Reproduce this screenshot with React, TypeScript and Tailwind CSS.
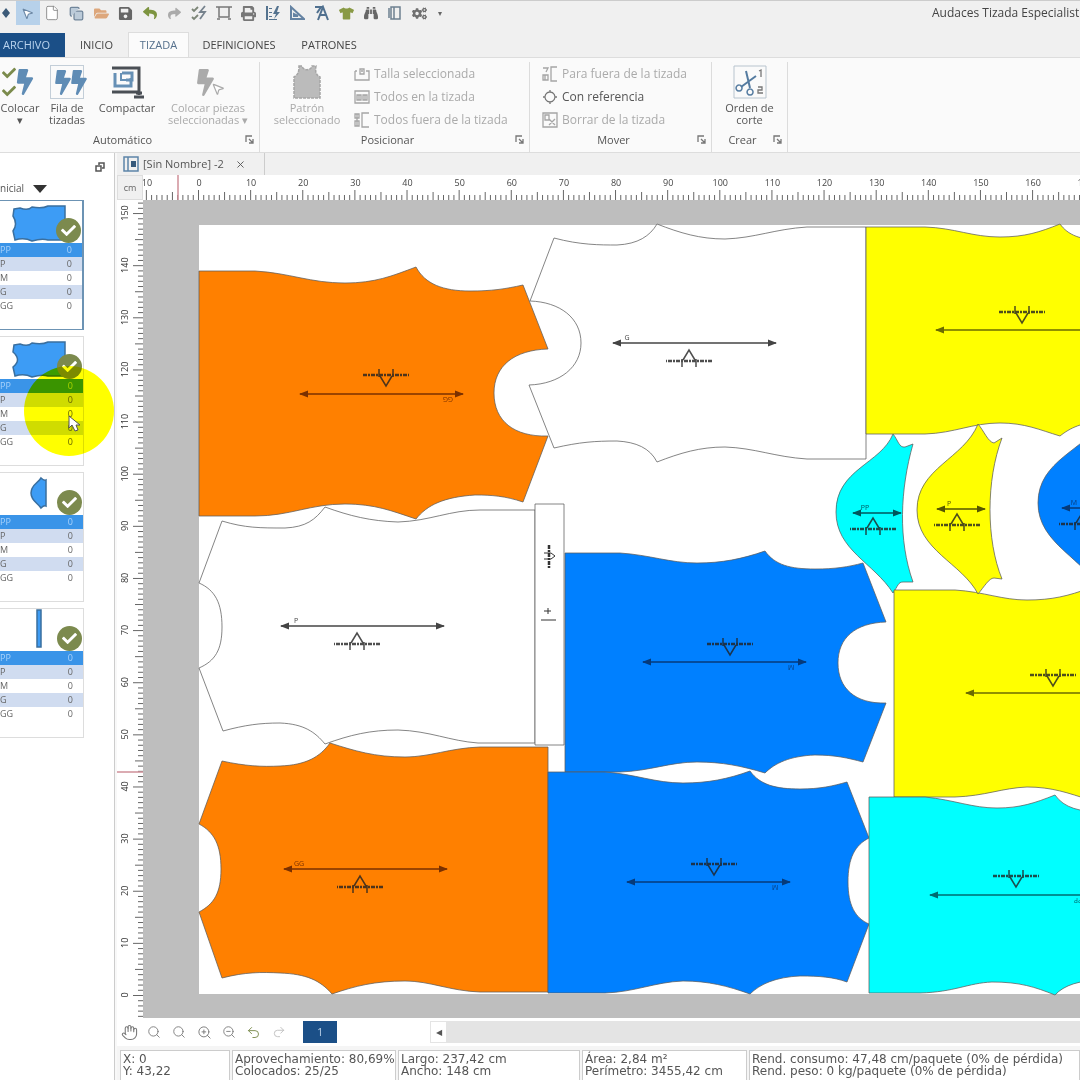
import type { ReactNode } from "react";
import {
  FaBinoculars,
  FaBolt,
  FaCheck,
  FaCogs,
  FaFolderOpen,
  FaPrint,
  FaReply,
  FaSave,
  FaShare,
  FaTshirt,
} from "react-icons/fa";
import { Copy, File, Hand, MousePointer2, Redo2, Search, Undo2, X, ZoomIn, ZoomOut } from "lucide-react";

const ORANGE = "#ff8000";
const BLUE = "#0080ff";
const YELLOW = "#ffff00";
const CYAN = "#00ffff";

// pixels per centimetre on the marker
const CM = 5.213;

const pieces = [
  { fill: "#fff", d: "M554 238 C580 245 600 245 617 245 C638 244 650 236 657 224 C680 233 700 239 725 239 C755 238 775 229 807 227 H866 V459 H807 C775 457 755 448 725 447 C700 447 680 453 657 462 C650 448 636 442 617 441 C595 441 580 442 554 448 L529 385 C560 384 581 367 581 343 C581 318 560 302 530 301 Z" },
  { fill: ORANGE, d: "M199 271 H255 C290 273 310 283 345 283 C375 283 392 276 416 267 C425 284 443 291 470 291 C492 291 505 289 523 285 L548 349 C514 350 494 366 494 393 C494 421 514 437 548 436 L523 502 C505 496 492 495 475 495 C444 497 427 505 416 519 C392 511 375 504 345 504 C310 504 290 516 255 516 H199 Z" },
  { fill: "#fff", d: "M222 521 C245 528 260 528 285 528 C306 527 315 520 325 507 C350 516 370 521 398 522 C430 521 450 510 480 510 H535 V743 H478 C450 741 430 731 398 730 C370 730 350 735 325 744 C315 732 304 724 280 723 C260 723 245 725 223 731 L199 668 C215 661 222 650 222 627 C222 603 215 590 199 583 Z" },
  { fill: ORANGE, d: "M222 761 C245 766 262 767 280 766 C306 765 320 757 330 743 C355 751 375 757 405 757 C430 757 450 748 480 747 H548 V992 H480 C450 991 430 981 405 981 C375 981 355 986 332 994 C320 980 306 974 280 973 C262 972 245 972 222 978 L199 912 C214 904 221 893 221 869 C221 845 214 832 199 824 Z" },
  { fill: "#fff", d: "M535 504 H564 V745 H535 Z" },
  { fill: BLUE, d: "M565 553 H620 C650 555 670 563 697 563 C722 563 742 559 765 551 C775 565 790 569 815 569 C835 569 848 567 863 563 L886 622 C855 623 838 638 838 663 C838 688 855 704 886 703 L863 762 C848 758 835 755 815 755 C790 756 775 763 765 773 C742 766 722 762 697 762 C670 762 650 771 620 772 H565 Z" },
  { fill: BLUE, d: "M548 772 H605 C635 774 655 783 683 783 C708 783 728 779 750 771 C760 785 776 789 800 789 C820 789 833 786 847 782 L869 838 C855 845 848 858 848 882 C848 905 855 918 869 924 L847 982 C833 977 820 976 800 976 C776 977 760 984 750 994 C728 986 708 981 683 981 C655 982 635 992 605 993 H548 Z" },
  { fill: YELLOW, d: "M866 227 H925 C955 228 972 237 1000 237 C1025 237 1040 232 1060 224 C1068 235 1080 240 1105 241 C1130 241 1145 239 1160 235 L1182 292 C1150 293 1135 308 1135 331 C1135 354 1150 370 1182 370 L1160 428 C1145 423 1130 421 1105 421 C1082 422 1070 428 1060 436 C1040 430 1025 423 1000 423 C972 423 955 433 925 434 H866 Z" },
  { fill: CYAN, d: "M893 434 C881 464 836 469 836 512 C836 550 874 563 893 593 C898 586 898 582 903 582 L913 582 C898 540 900 490 913 444 L905 447 C899 448 898 440 893 434 Z" },
  { fill: YELLOW, d: "M894 590 H955 C985 592 1002 600 1027 600 C1052 600 1068 596 1090 588 C1098 600 1114 604 1138 604 C1158 604 1170 602 1184 598 L1206 655 C1175 656 1160 671 1160 694 C1160 717 1175 733 1206 732 L1184 790 C1170 786 1158 784 1138 784 C1114 785 1098 792 1090 800 C1068 793 1052 787 1027 787 C1002 788 985 796 955 797 H894 Z" },
  { fill: YELLOW, d: "M978 424 C964 459 917 468 917 510 C917 550 962 563 978 594 C984 587 989 578 994 578 L1002 579 C986 540 986 480 1002 438 L994 443 C988 442 984 431 978 424 Z" },
  { fill: BLUE, d: "M1102 421 C1085 450 1038 460 1038 503 C1038 545 1086 558 1102 594 C1112 580 1118 575 1127 578 C1111 540 1111 480 1127 438 C1118 445 1111 436 1102 421 Z" },
  { fill: CYAN, d: "M869 797 H925 C955 800 972 808 997 808 C1020 808 1035 803 1055 795 C1064 808 1080 812 1103 812 C1123 812 1136 810 1150 806 L1172 862 C1142 864 1128 878 1128 895 C1128 915 1142 930 1172 929 L1150 985 C1136 981 1123 980 1103 980 C1080 980 1064 985 1055 995 C1035 987 1020 982 992 982 C968 983 955 992 920 993 H869 Z" },
];

// grain lines: start, end, baseline; up = mark sits under the line
const grains = [
  { x1: 300, x2: 463, y: 394, mx: 386, my: 375, up: false, size: "GG", lx: 448, ink: "#7a3000" },
  { x1: 613, x2: 776, y: 343, mx: 689, my: 361, up: true, size: "G", lx: 627, ink: "#444" },
  { x1: 281, x2: 444, y: 626, mx: 357, my: 644, up: true, size: "P", lx: 296, ink: "#444" },
  { x1: 284, x2: 447, y: 869, mx: 360, my: 887, up: true, size: "GG", lx: 299, ink: "#7a3000" },
  { x1: 643, x2: 806, y: 662, mx: 730, my: 644, up: false, size: "M", lx: 791, ink: "#063a7a" },
  { x1: 627, x2: 790, y: 882, mx: 714, my: 864, up: false, size: "M", lx: 775, ink: "#063a7a" },
  { x1: 936, x2: 1099, y: 330, mx: 1022, my: 312, up: false, size: "P", lx: 1086, ink: "#6b6b00" },
  { x1: 966, x2: 1129, y: 693, mx: 1053, my: 675, up: false, size: "P", lx: 1116, ink: "#6b6b00" },
  { x1: 930, x2: 1093, y: 895, mx: 1016, my: 876, up: false, size: "PP", lx: 1078, ink: "#006b70" },
  { x1: 853, x2: 901, y: 513, mx: 873, my: 529, up: true, size: "PP", lx: 865, ink: "#00565c" },
  { x1: 937, x2: 985, y: 509, mx: 957, my: 525, up: true, size: "P", lx: 949, ink: "#555500" },
  { x1: 1062, x2: 1110, y: 508, mx: 1082, my: 524, up: true, size: "M", lx: 1074, ink: "#063a7a" },
];

function Grain({ g }: { g: (typeof grains)[number] }) {
  return (
    <g stroke={g.ink} fill={g.ink}>
      <path d={`M${g.x1} ${g.y} H${g.x2}`} strokeWidth="1.5" />
      <path d={`M${g.x1 - 1} ${g.y} l9 -3.5 v7 Z M${g.x2 + 1} ${g.y} l-9 -3.5 v7 Z`} stroke="none" />
      <g transform={`translate(${g.mx} ${g.my}) rotate(${g.up ? 180 : 0})`} stroke="#222" fill="none" opacity="0.8">
        <path d="M-23 0 H23" strokeWidth="2.5" strokeDasharray="4 1 2 1" />
        <path d="M-7 -6 V2 M7 -6 V2 M-6 1 L0 11 L6 1" strokeWidth="1.5" />
      </g>
      <text
        transform={g.up ? `translate(${g.lx} ${g.y - 3})` : `translate(${g.lx} ${g.y + 3}) rotate(180)`}
        textAnchor="middle"
        fontSize="7"
        stroke="none"
      >
        {g.size}
      </text>
    </g>
  );
}

function range(from: number, to: number) {
  return Array.from({ length: to - from + 1 }, (_, i) => from + i);
}

function tickLength(n: number) {
  if (n % 10 === 0) return 10;
  return n % 5 === 0 ? 8 : 5;
}

function HorizontalRuler() {
  return (
    <svg className="w-full h-full" aria-hidden="true">
      {range(-10, 240).map((n) => (
        <path key={n} d={`M${55.5 + n * CM} 25 v${-tickLength(n)}`} stroke="#666" strokeWidth="1" />
      ))}
      {range(-1, 24).map((n) => (
        <text key={n} x={56 + n * 10 * CM} y="11" textAnchor="middle" fontSize="9" fill="#444">
          {Math.abs(n * 10)}
        </text>
      ))}
      <path d="M35 0 V25" stroke="#cf8f98" strokeWidth="1.5" />
    </svg>
  );
}

function VerticalRuler() {
  return (
    <svg className="w-full h-full" aria-hidden="true">
      {range(-80, 152).map((n) => (
        <path key={n} d={`M26 ${795.5 - n * CM} h${-tickLength(n)}`} stroke="#666" strokeWidth="1" />
      ))}
      {range(0, 15).map((n) => (
        <text
          key={n}
          transform={`translate(11 ${795 - n * 10 * CM}) rotate(-90)`}
          textAnchor="middle"
          fontSize="9"
          fill="#333"
        >
          {n * 10}
        </text>
      ))}
      <path d="M0 572 H26" stroke="#cf8f98" strokeWidth="1.5" />
    </svg>
  );
}

function Marker() {
  return (
    <svg className="absolute inset-0 w-full h-full" role="img" aria-label="Tizada">
      <g transform="translate(-143 -200)">
        <rect x="199" y="225" width="1237" height="769" fill="#fff" />
        {pieces.map((p) => (
          <path key={p.d} d={p.d} fill={p.fill} stroke="#5c5c5c" strokeOpacity="0.75" strokeWidth="1" />
        ))}
        {grains.map((g) => (
          <Grain key={`${g.x1}-${g.y}`} g={g} />
        ))}
        {/* tira */}
        <g stroke="#333" strokeWidth="1" fill="none">
          <path d="M549 545 V568" strokeDasharray="4 1 2 1" strokeWidth="2.5" />
          <path d="M544 553 H551 L555 556 L551 559 H544" />
          <path d="M541 620 H556" />
          <path d="M544 611 H551 M548 608 V614" />
        </g>
      </g>
    </svg>
  );
}

/* barra de acceso rápido */
const quickTools: { label: string; icon: ReactNode; on?: boolean }[] = [
  {
    label: "Mover",
    icon: (
      <svg viewBox="0 0 16 16" className="size-4" fill="#3c5a78">
        <path d="M11 3 L15 8 L11 13 L7 8 Z M2 7 h3 v2 h-3 Z" />
      </svg>
    ),
  },
  { label: "Seleccionar", icon: <MousePointer2 size={13} className="text-[#6a87a5] fill-white" />, on: true },
  { label: "Nuevo", icon: <File size={16} strokeWidth={1.2} className="text-[#777] fill-white" /> },
  { label: "Copiar", icon: <Copy size={15} className="text-[#70859a] fill-[#bccbd9]" /> },
  { label: "Abrir", icon: <FaFolderOpen size={15} className="text-[#dda77c]" /> },
  { label: "Guardar", icon: <FaSave size={15} className="text-[#666]" /> },
  { label: "Deshacer", icon: <FaReply size={14} className="text-[#7d9440]" /> },
  { label: "Rehacer", icon: <FaShare size={13} className="text-[#aaa]" /> },
  {
    label: "Colocar",
    icon: (
      <svg viewBox="0 0 16 16" className="size-4" fill="none" stroke="#7c8577" strokeWidth="1.8">
        <path d="M1 4 l2 2 l4 -4 M1 12 l2 2 l4 -4" />
        <path d="M14 1 L9 7 H14 L9 14" stroke="#76828d" />
      </svg>
    ),
  },
  {
    label: "Ajustar",
    icon: (
      <svg viewBox="0 0 16 16" className="size-4" fill="none" stroke="#777" strokeWidth="1.5">
        <path d="M0 2 H16 M3 2 V12 H13 V2 M1 14 H4 M12 14 H15" />
      </svg>
    ),
  },
  { label: "Imprimir", icon: <FaPrint size={15} className="text-[#777]" /> },
  {
    label: "Medir",
    icon: (
      <svg viewBox="0 0 16 16" className="size-4" fill="#55738f">
        <path d="M1 1 h2 v14 h-2 Z M4 3 h3 v1 h-3 Z M4 7 h3 v1 h-3 Z M4 11 h3 v1 h-3 Z M12 1 L8 9 h3 L9 14 L15 7 h-3 L14 1 Z M4 14 h8 v1 h-8 Z" />
      </svg>
    ),
  },
  {
    label: "Escuadra",
    icon: (
      <svg viewBox="0 0 16 16" className="size-4" fill="none" stroke="#6583a3" strokeWidth="2">
        <path d="M2 2 V14 H15 Z M5 9 V11 H9 Z" />
      </svg>
    ),
  },
  {
    label: "Texto",
    icon: (
      <svg viewBox="0 0 16 16" className="size-4" fill="none" stroke="#50708f" strokeWidth="2">
        <path d="M4 15 L9 2 L14 15 M6 10 H12 M1 2 H7 L3 8" />
      </svg>
    ),
  },
  { label: "Modelo", icon: <FaTshirt size={15} className="text-[#899a45]" /> },
  { label: "Buscar", icon: <FaBinoculars size={14} className="text-[#666]" /> },
  {
    label: "Informe",
    icon: (
      <svg viewBox="0 0 16 16" className="size-4" fill="none" stroke="#6d8090" strokeWidth="1.5">
        <path d="M4 2 H13 V14 H4 Z M7 2 V14 M2 3 V13" />
      </svg>
    ),
  },
  { label: "Opciones", icon: <FaCogs size={15} className="text-[#707070]" /> },
];

function TitleBar() {
  return (
    <header className="flex items-center justify-between h-8 bg-[#f0f0f0] border-t border-[#ccc] overflow-hidden">
      <div className="flex items-start h-full">
        <div className="grid grid-cols-[repeat(18,1fr)] w-[441px] -ml-[9px]">
          {quickTools.map((t) => (
            <button
              key={t.label}
              aria-label={t.label}
              className={t.on ? "flex items-center justify-center h-6 bg-[#b7d1ea]" : "flex items-center justify-center h-6"}
            >
              {t.icon}
            </button>
          ))}
        </div>
        <button aria-label="Personalizar" className="w-4 h-6 text-[8px] text-[#666]">
          ▾
        </button>
      </div>
      <h1 className="w-[148px] h-8 pt-1 text-xs whitespace-nowrap overflow-hidden text-[#444]">Audaces Tizada Especialist</h1>
    </header>
  );
}

function Tabs() {
  return (
    <nav className="flex items-end h-[25px] bg-[#f0f0f0] text-[11px] text-[#444]">
      <button className="w-[65px] h-6 pr-3 bg-[#1b4f87] text-[#b9d3ee]">ARCHIVO</button>
      <button className="w-[63px] h-6">INICIO</button>
      <button className="w-[61px] h-[25px] bg-[#fbfbfb] border border-b-0 border-[#ddd] text-[#55708c]">TIZADA</button>
      <button className="w-[100px] h-6">DEFINICIONES</button>
      <button className="w-20 h-6">PATRONES</button>
    </nav>
  );
}

function Group({ title, width, children }: { title: string; width: string; children: ReactNode }) {
  return (
    <section className={`${width} flex flex-col shrink-0 border-r border-[#dcdcdc]`}>
      <div className="flex-1 flex">{children}</div>
      <div className="flex items-center h-5 pr-1 pb-1 text-[11px] font-medium text-[#555]">
        <span className="flex-1 text-center">{title}</span>
        <button aria-label={`Más opciones de ${title}`}>
          <svg viewBox="0 0 10 10" className="size-[10px]" fill="none" stroke="#777">
            <path d="M1 7 V1 H7 M4 4 L8 8 M8 4 V8 H4" strokeWidth="1.3" />
          </svg>
        </button>
      </div>
    </section>
  );
}

function BigButton({ lines, width, icon, off }: { lines: string[]; width: string; icon: ReactNode; off?: boolean }) {
  return (
    <button className={`${width} flex flex-col items-center shrink-0 leading-3 whitespace-nowrap text-[11px] ${off ? "text-[#aaa]" : "text-[#555]"}`}>
      <span className="flex items-center justify-center h-10">{icon}</span>
      {lines.map((l) => (
        <span key={l}>{l}</span>
      ))}
    </button>
  );
}

function SmallButton({ label, icon, on }: { label: string; icon: ReactNode; on?: boolean }) {
  return (
    <button className={`flex items-center gap-1 h-[23px] text-xs whitespace-nowrap ${on ? "text-[#555]" : "text-[#aaa]"}`}>
      {icon}
      {label}
    </button>
  );
}

function SmallIcon({ d, dark }: { d: string; dark?: boolean }) {
  return (
    <svg viewBox="0 0 16 16" className="size-4" fill="none" stroke={dark ? "#777" : "#a5a5a5"} strokeWidth="1.3">
      <path d={d} />
    </svg>
  );
}

function Ribbon() {
  return (
    <div className="flex h-24 pt-1 bg-[#fafafa] border-y border-[#ddd] overflow-hidden">
      <Group title="Automático" width="w-[260px]">
        <BigButton
          width="w-10"
          lines={["Colocar", "▾"]}
          icon={
            <span className="flex items-center">
              <span className="flex flex-col gap-1 text-[#7b8b4c]">
                <FaCheck size={14} />
                <FaCheck size={14} />
              </span>
              <FaBolt size={26} className="-ml-1 text-[#5f8cb5]" />
            </span>
          }
        />
        <BigButton
          width="w-[54px]"
          lines={["Fila de", "tizadas"]}
          icon={
            <span className="flex items-center w-[34px] h-[34px] border border-[#c3ced8] text-[#5f8cb5]">
              <FaBolt size={25} className="-mr-2" />
              <FaBolt size={25} className="-mr-2" />
            </span>
          }
        />
        <BigButton
          width="w-[66px]"
          lines={["Compactar"]}
          icon={
            <svg viewBox="0 0 34 34" className="size-[34px]" fill="none">
              <path d="M2 3 H29 V30 M2 27 H29 M24 32 H34 M26 28 H32" stroke="#4a4f55" strokeWidth="3" />
              <path d="M5 8 V21 H21 V13 M12 8 H22 V15 H16" stroke="#6690b5" strokeWidth="3" />
              <path d="M11 8 V15 H16" stroke="#6690b5" strokeWidth="2" />
            </svg>
          }
        />
        <BigButton
          width="w-24"
          off
          lines={["Colocar piezas", "seleccionadas ▾"]}
          icon={
            <span className="flex items-end text-[#aaa]">
              <FaBolt size={27} />
              <MousePointer2 size={14} className="-ml-2 fill-white" />
            </span>
          }
        />
      </Group>

      <Group title="Posicionar" width="w-[270px]">
        <BigButton
          width="w-[94px]"
          off
          lines={["Patrón", "seleccionado"]}
          icon={
            <svg viewBox="0 0 28 34" className="w-7 h-[34px]" fill="#bbb" stroke="#a5a5a5" strokeDasharray="3 1">
              <path d="M6 1 H9 C10 6 18 6 19 1 H23 C22 7 23 10 27 12 V33 H1 V12 C5 10 6 7 6 1 Z" strokeWidth="1.5" />
            </svg>
          }
        />
        <div className="flex flex-col">
          <SmallButton label="Talla seleccionada" icon={<SmallIcon d="M1 5 V14 H15 V5 H12 M1 5 H3 M6 8 V3 H10 V8 Z M7 5 H9" />} />
          <SmallButton label="Todos en la tizada" icon={<SmallIcon d="M1 2 H15 V14 H1 Z M3 6 V11 H7 V6 Z M9 6 V11 H13 V6 Z M5 6 V11 M11 6 V11" />} />
          <SmallButton label="Todos fuera de la tizada" icon={<SmallIcon d="M15 1 H8 V15 H15 M1 2 H5 V6 H1 Z M1 9 H5 V14 H1 Z M3 2 V14" />} />
        </div>
      </Group>

      <Group title="Mover" width="w-[182px]">
        <div className="flex flex-col pl-3">
          <SmallButton label="Para fuera de la tizada" icon={<SmallIcon d="M15 1 H9 V15 H15 M1 2 H6 L4 6 M1 9 H6 V14 H1 Z M3 9 V14" />} />
          <SmallButton on label="Con referencia" icon={<SmallIcon dark d="M8 3 A5 5 0 1 1 7.9 3 M8 1 V3 M8 13 V15 M1 8 H3 M13 8 H15" />} />
          <SmallButton label="Borrar de la tizada" icon={<SmallIcon d="M1 1 H15 V15 H1 Z M3 3 V8 H7 V3 Z M7 7 L13 13 M13 7 L7 13" />} />
        </div>
      </Group>

      <Group title="Crear" width="w-[76px]">
        <BigButton
          width="w-[75px]"
          lines={["Orden de", "corte"]}
          icon={
            <svg viewBox="0 0 34 34" className="size-[34px]" fill="none" stroke="#547ba0" strokeWidth="2">
              <path d="M1 1 H33 V33 H1 Z" stroke="#b8c4ce" strokeWidth="1" />
              <path d="M13 6 L17 23 M23 11 L8 22" />
              <path d="M6 20 a3 3 0 1 0 .1 0 M17 24 a3 3 0 1 0 .1 0" strokeWidth="1.5" />
              <path d="M26 6 L28 5 V12 M25 22 H29 V25 H25 V28 H30" stroke="#777" strokeWidth="1.3" />
            </svg>
          }
        />
      </Group>
    </div>
  );
}

/* lista de patrones */
const sizes = ["PP", "P", "M", "G", "GG"];

const patterns = [
  { name: "Frente", on: true, d: "M14 8 L20 7 Q28 10 32 6 Q42 8 48 5 H65 V39 H48 Q42 37 32 40 Q24 36 15 39 L13 30 Q18 23 13 15 Z" },
  { name: "Espalda", d: "M14 8 L20 7 Q28 10 32 6 Q42 8 48 5 H65 V39 H48 Q42 37 32 40 Q24 36 15 39 L13 30 Q22 23 13 15 Z" },
  { name: "Manga", d: "M41 5 Q44 8 46 7 V33 Q44 32 41 35 C38 30 31 28 31 20 C31 12 38 10 41 5 Z" },
  { name: "Tira", d: "M37 1 H41 V38 H37 Z" },
];

function PatternCard({ p }: { p: (typeof patterns)[number] }) {
  return (
    <div className={`relative w-[84px] h-[130px] border-y border-r ${p.on ? "border-[#6c93b4] border-r-2" : "border-[#ddd]"}`}>
      <svg className="w-full h-[42px]" aria-label={p.name}>
        <path d={p.d} fill="#3d9cf5" stroke="#3a6f9f" strokeWidth="1.5" />
      </svg>
      <table className="w-full text-[9px] text-[#666]">
        <tbody>
          {sizes.map((s, i) => (
            <tr key={s} className={i === 0 ? "h-[14px] bg-[#3a94e8] text-[#a9d2fb]" : i % 2 ? "h-[14px] bg-[#d0dcf0]" : "h-[14px]"}>
              <th className="p-0 font-normal text-left leading-3">{s}</th>
              <td className="p-0 pr-[10px] text-right leading-3">0</td>
            </tr>
          ))}
        </tbody>
      </table>
      <span className="absolute top-[17px] right-[1px] flex items-center justify-center size-[25px] rounded-full bg-[#7c8a4e] text-white">
        <FaCheck size={15} />
      </span>
    </div>
  );
}

function Sidebar() {
  return (
    <aside className="relative w-[115px] shrink-0 bg-white border-r border-[#ccc]">
      <div className="flex justify-end h-6 pr-2 pt-1">
        <button aria-label="Fijar panel">
          <svg viewBox="0 0 12 12" className="size-3" fill="none" stroke="#555" strokeWidth="1.5">
            <path d="M5 4 V2 H10 V7 H8 M2 5 H7 V10 H2 Z" />
          </svg>
        </button>
      </div>
      <button className="flex items-center gap-[9px] h-[23px] text-[10px] text-[#555]">
        nicial
        <svg viewBox="0 0 14 8" className="w-[14px] h-2">
          <path d="M0 0 H14 L7 8 Z" fill="#333" />
        </svg>
      </button>
      <div className="flex flex-col gap-[6px]">
        {patterns.map((p) => (
          <PatternCard key={p.name} p={p} />
        ))}
      </div>
      {/* resaltado del puntero */}
      <span className="absolute top-[213px] left-[24px] size-[90px] rounded-full bg-[#ffff00] mix-blend-multiply pointer-events-none" />
      <svg viewBox="0 0 16 20" className="absolute top-[262px] left-[68px] w-4 h-5 pointer-events-none">
        <path d="M1 1 L1 13 L4 10 L7 16 L10 15 L8 10 H12 Z" fill="#fff" stroke="#555" />
      </svg>
    </aside>
  );
}

const zoomTools = [
  { label: "Mano", icon: <Hand size={17} strokeWidth={1.5} /> },
  { label: "Zoom", icon: <Search size={14} strokeWidth={1.5} /> },
  { label: "Zoom a la tizada", icon: <Search size={14} strokeWidth={1.5} /> },
  { label: "Acercar", icon: <ZoomIn size={15} strokeWidth={1.5} /> },
  { label: "Alejar", icon: <ZoomOut size={14} strokeWidth={1.5} /> },
  { label: "Zoom anterior", icon: <Undo2 size={15} strokeWidth={1.5} className="text-[#7b8b4c]" /> },
  { label: "Zoom siguiente", icon: <Redo2 size={14} strokeWidth={1.5} className="text-[#bbb]" /> },
];

const stats = [
  { width: "w-[110px]", a: "X: 0", b: "Y: 43,22" },
  { width: "w-[164px]", a: "Aprovechamiento: 80,69%", b: "Colocados: 25/25" },
  { width: "w-[182px]", a: "Largo: 237,42 cm", b: "Ancho: 148 cm" },
  { width: "w-[165px]", a: "Área: 2,84 m²", b: "Perímetro: 3455,42 cm" },
  { width: "flex-1", a: "Rend. consumo: 47,48 cm/paquete (0% de pérdida)", b: "Rend. peso: 0 kg/paquete (0% de pérdida)" },
];

function Workspace() {
  return (
    <main className="flex-1 min-w-0 flex flex-col pl-[2px] bg-[#f8f8f8]">
      {/* documento */}
      <div className="flex h-[22px] shrink-0 bg-[#f0f0f0]">
        <div className="flex items-center w-[148px] pl-[6px] border-r border-[#ccc] text-[11px] text-[#555]">
          <svg viewBox="0 0 16 16" className="size-4" fill="none">
            <path d="M1 1 H15 V15 H1 Z M5 1 V15" stroke="#5c84a8" strokeWidth="1.5" />
            <path d="M8 5 h5 v6 h-5 Z" fill="#35597b" />
          </svg>
          <span className="pl-1 whitespace-nowrap">[Sin Nombre] -2</span>
          <button aria-label="Cerrar" className="ml-auto pr-[18px]">
            <X size={11} />
          </button>
        </div>
      </div>

      <div className="flex-1 min-h-0 grid grid-cols-[26px_minmax(0,1fr)] grid-rows-[25px_minmax(0,1fr)] bg-white">
        <div className="flex items-center justify-center border border-[#ddd] bg-[#f0f0f0] text-[9px] text-[#666]">cm</div>
        <HorizontalRuler />
        <VerticalRuler />
        <div className="relative overflow-hidden bg-[#bebebe]">
          <Marker />
        </div>
      </div>

      {/* zoom, hojas y barra de desplazamiento */}
      <div className="flex items-center h-7 shrink-0 bg-white text-[#777]">
        <div className="flex w-[174px]">
          {zoomTools.map((t) => (
            <button key={t.label} aria-label={t.label} className="flex items-center justify-center w-[25px] h-6">
              {t.icon}
            </button>
          ))}
        </div>
        <button className="w-[34px] h-[22px] ml-3 bg-[#1b4f87] text-[10px] text-[#c9dcf0]">1</button>
        <div className="flex flex-1 h-[22px] ml-[93px] bg-[#e4e4e4]">
          <button aria-label="Desplazar a la izquierda" className="w-[17px] bg-white border border-[#e4e4e4] text-[8px] text-[#555]">
            ◀
          </button>
        </div>
      </div>

      <footer className="flex gap-[2px] h-[34px] shrink-0 pt-1 pl-[3px] bg-[#f5f5f5] font-['DejaVu_Sans',sans-serif] text-xs leading-3 text-[#555]">
        {stats.map((s) => (
          <div key={s.a} className={`${s.width} pl-[2px] pt-[2px] border border-b-0 border-[#ccc] bg-white whitespace-nowrap overflow-hidden`}>
            <p>{s.a}</p>
            <p>{s.b}</p>
          </div>
        ))}
      </footer>
    </main>
  );
}

export default function App() {
  return (
    <div className="flex flex-col h-screen overflow-hidden bg-white font-['Open_Sans','Noto_Sans',sans-serif]">
      <TitleBar />
      <Tabs />
      <Ribbon />
      <div className="flex-1 min-h-0 flex">
        <Sidebar />
        <Workspace />
      </div>
    </div>
  );
}
